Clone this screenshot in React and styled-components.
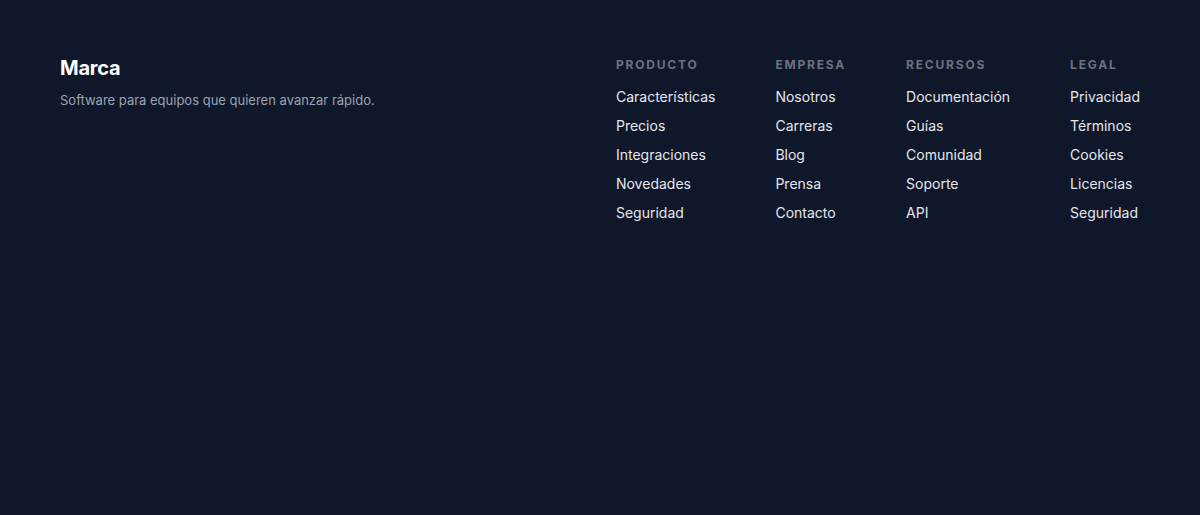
import React from "react";
import styled, { createGlobalStyle } from "styled-components";

const columns = [
  { title: "Producto", links: ["Características", "Precios", "Integraciones", "Novedades", "Seguridad"] },
  { title: "Empresa", links: ["Nosotros", "Carreras", "Blog", "Prensa", "Contacto"] },
  { title: "Recursos", links: ["Documentación", "Guías", "Comunidad", "Soporte", "API"] },
  { title: "Legal", links: ["Privacidad", "Términos", "Cookies", "Licencias", "Seguridad"] },
];

const GlobalStyle = createGlobalStyle`
  html, body {
    margin: 0;
    background: #0f172a;
    font-family: Inter, "Noto Sans", sans-serif;
    -webkit-font-smoothing: antialiased;
  }
  #root {
    min-height: 100vh;
  }
`;

const Footer = styled.footer`
  min-height: 100vh;
  box-sizing: border-box;
  background: #0f172a;
  padding: 56px 60px;
  display: flex;
  justify-content: space-between;
  align-items: flex-start;
`;

const Brand = styled.div`
  display: flex;
  flex-direction: column;
  gap: 10px;
`;

const Logo = styled.div`
  font-size: 20px;
  line-height: 24px;
  font-weight: 700;
  color: #ffffff;
  letter-spacing: -0.01em;
`;

const Tagline = styled.p`
  margin: 0;
  font-size: 13px;
  line-height: 20px;
  color: #9ca3af;
`;

const Columns = styled.nav`
  display: flex;
  gap: 60px;
  padding-top: 1px;
`;

const Column = styled.div`
  display: flex;
  flex-direction: column;
`;

const Heading = styled.h4`
  margin: 0 0 14px;
  font-size: 12px;
  line-height: 16px;
  font-weight: 700;
  letter-spacing: 0.15em;
  text-transform: uppercase;
  color: #6b7280;
`;

const LinkList = styled.ul`
  list-style: none;
  margin: 0;
  padding: 0;
  display: flex;
  flex-direction: column;
  gap: 9px;
`;

const Link = styled.a`
  display: block;
  font-size: 14px;
  line-height: 20px;
  color: #e5e7eb;
  text-decoration: none;
  white-space: nowrap;
`;

export default function App() {
  return (
    <>
      <GlobalStyle />
      <Footer>
        <Brand>
          <Logo>Marca</Logo>
          <Tagline>Software para equipos que quieren avanzar rápido.</Tagline>
        </Brand>
        <Columns>
          {columns.map((col) => (
            <Column key={col.title}>
              <Heading>{col.title}</Heading>
              <LinkList>
                {col.links.map((link) => (
                  <li key={link}>
                    <Link href="#">{link}</Link>
                  </li>
                ))}
              </LinkList>
            </Column>
          ))}
        </Columns>
      </Footer>
    </>
  );
}
